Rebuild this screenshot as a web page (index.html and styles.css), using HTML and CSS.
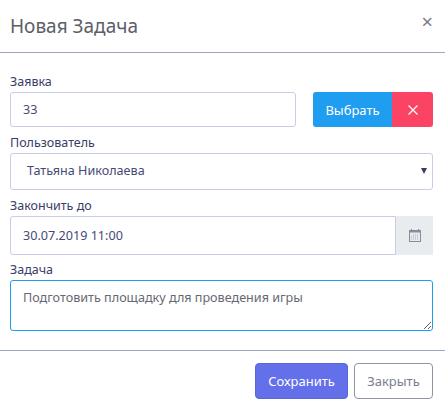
FILE: index.html
```html
<!DOCTYPE html>
<html lang="en">
<head>
  <meta charset="UTF-8" />
  <title>Новая Задача</title>
  <link rel="stylesheet" href="styles.css">
</head>
<body>
  <div class="modal">
    <div class="modal-header">
      <h5>Новая Задача</h5>
      <button class="close-btn" type="button">×</button>
    </div>

    <div class="modal-body">
      <label>Заявка</label>
      <div class="row">
        <input class="field grow" type="text" value="33">
        <div class="btn-group">
          <button class="btn blue" type="button">Выбрать</button>
          <button class="btn red" type="button">
            <svg width="12" height="12" viewBox="0 0 12 12"><path d="M1.5 1.5l9 9M10.5 1.5l-9 9" stroke="#fff" stroke-width="1.2" fill="none"/></svg>
          </button>
        </div>
      </div>

      <label>Пользователь</label>
      <div class="field select">
        <span>Татьяна Николаева</span>
        <i class="caret"></i>
      </div>

      <label>Закончить до</label>
      <div class="row date">
        <input class="field grow" type="text" value="30.07.2019 11:00">
        <span class="addon">
          <svg width="12" height="13" viewBox="0 0 12 13">
            <path d="M2.5 0v2M9.5 0v2" stroke="#8a8c9c" stroke-width="1.2"/>
            <rect x="0.5" y="1.5" width="11" height="11" fill="none" stroke="#8a8c9c"/>
            <rect x="0.5" y="1.5" width="11" height="2" fill="#8a8c9c"/>
            <path d="M4 6h6M2 8h8M2 10h8" stroke="#a9abb8" stroke-dasharray="1 1"/>
          </svg>
        </span>
      </div>

      <label>Задача</label>
      <textarea class="field task">Подготовить площадку для проведения игры</textarea>
    </div>

    <div class="modal-footer">
      <button class="btn save" type="button">Сохранить</button>
      <button class="btn cancel" type="button">Закрыть</button>
    </div>
  </div>
</body>
</html>
```
FILE: styles.css
```css
* {
  box-sizing: border-box;
}
body {
  margin: 0;
  background-color: white;
  font-family: "Noto Sans", "Open Sans", sans-serif;
  font-size: 13px;
  color: #3a3d68;
}
.modal {
  width: 445px;
  height: 408px;
}
.modal-header {
  display: flex;
  justify-content: space-between;
  height: 53px;
  padding: 13px 12px 0 10px;
  border-bottom: 1px solid #9aa7bd;
}
.modal-header h5 {
  margin: 0;
  font-size: 19px;
  font-weight: 400;
  line-height: 26px;
  color: #5c5e67;
}
.close-btn {
  border: 0;
  padding: 0;
  height: 18px;
  background: none;
  font-family: inherit;
  font-size: 20px;
  line-height: 18px;
  color: #7b7d88;
}
.modal-body {
  padding: 19px 12px 0 10px;
  height: 298px;
  border-bottom: 1px solid #9aa7bd;
}
label {
  display: block;
  height: 20px;
  line-height: 20px;
  font-size: 12.5px;
}
.field {
  display: block;
  height: 35px;
  padding: 0 12px;
  border: 1px solid #c9cbe8;
  border-radius: 3px;
  background: white;
  font-family: inherit;
  font-size: 12.6px;
  color: #474a75;
  outline: none;
}
.row {
  display: flex;
  margin-bottom: 6px;
}
.grow {
  flex: 1;
  min-width: 0;
}
.btn-group {
  display: flex;
  margin-left: 17px;
}
.btn {
  border: 0;
  font-family: inherit;
  font-size: 13px;
  color: white;
}
.blue {
  width: 79px;
  background-color: #1f9df1;
  border-radius: 3px 0 0 3px;
}
.red {
  display: flex;
  align-items: center;
  justify-content: center;
  width: 41px;
  background-color: #fb4463;
  border-radius: 0 3px 3px 0;
}
.select {
  display: flex;
  align-items: center;
  justify-content: space-between;
  height: 37px;
  margin-bottom: 6px;
  padding: 0 5px 2px 16px;
}
.caret {
  width: 0;
  height: 0;
  border-left: 3.5px solid transparent;
  border-right: 3.5px solid transparent;
  border-top: 6px solid #3a3d68;
}
.date {
  margin-bottom: 5px;
}
.date .field {
  height: 39px;
  border-radius: 3px 0 0 3px;
}
.addon {
  display: flex;
  align-items: center;
  justify-content: center;
  width: 37px;
  background-color: #e9ecef;
}
.task {
  width: 100%;
  height: 51px;
  padding: 7px 12px;
  border-color: #1f9df1;
  color: #666872;
  line-height: 19px;
}
.modal-footer {
  display: flex;
  justify-content: flex-end;
  gap: 6px;
  padding: 12px 12px 0 0;
}
.save, .cancel {
  height: 36px;
  border-radius: 4px;
}
.save {
  width: 93px;
  background-color: #6370ea;
  border: 1px solid #5a66d8;
}
.cancel {
  width: 79px;
  background: white;
  border: 1px solid #8f93a3;
  color: #7b7e90;
}
```
